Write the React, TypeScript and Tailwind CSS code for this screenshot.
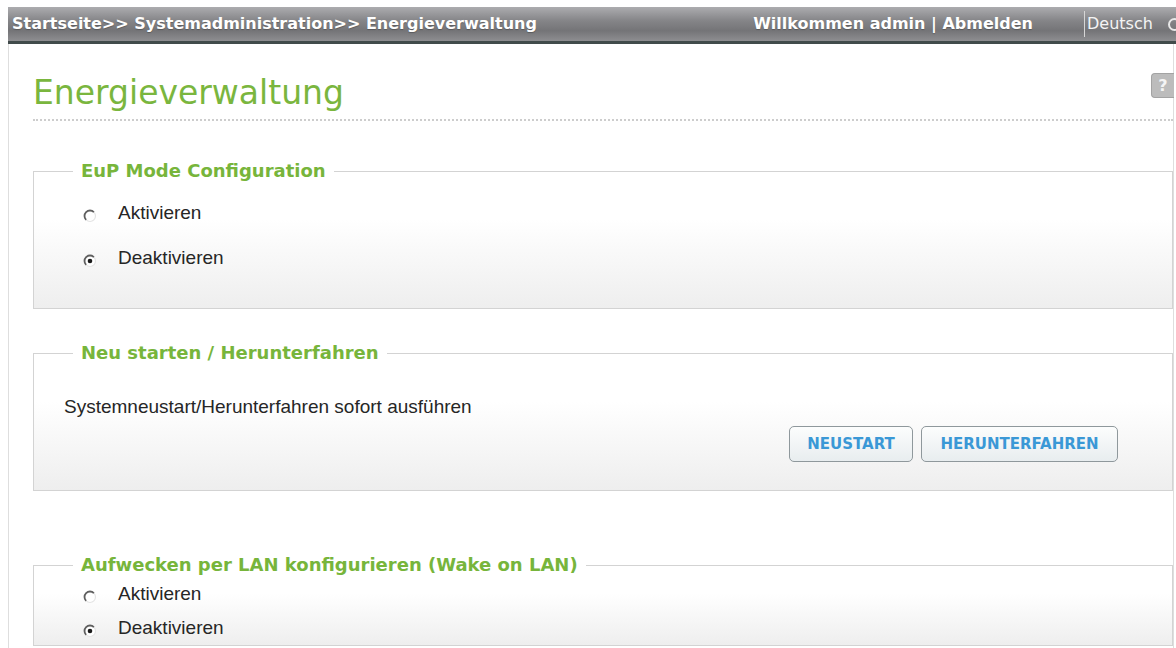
import React from "react";

const DEJAVU = "font-['DejaVu_Sans',Verdana,sans-serif]";

function Radio({ checked }: { checked?: boolean }) {
  return (
    <svg width="14" height="14" viewBox="0 0 14 14" className="mt-[6px] shrink-0">
      <circle cx="7" cy="7" r="5.5" fill="#fff" stroke="#e4e4e4" strokeWidth="1.2" />
      <path d="M3.11 10.89A5.5 5.5 0 0 1 10.89 3.11" fill="none" stroke="#5f5f5f" strokeWidth="1.8" />
      {checked && <circle cx="7" cy="7" r="2.3" fill="#1a1a1a" />}
    </svg>
  );
}

function RadioRow({ label, checked, height }: { label: string; checked?: boolean; height: string }) {
  return (
    <label className={`flex items-center gap-[21px] pl-[49px] ${height}`}>
      <Radio checked={checked} />
      <span className="text-[19px] leading-[24px] text-[#262626]">{label}</span>
    </label>
  );
}

function Legend({ children }: { children: React.ReactNode }) {
  return (
    <legend
      className={`ml-[39px] px-[8px] text-[18px] leading-[24px] font-bold text-[#77b53b] ${DEJAVU}`}
    >
      {children}
    </legend>
  );
}

const fieldsetCls =
  "border border-[#d3d3d3] bg-linear-to-b from-white from-35% to-[#eeeeee]";

export default function App() {
  return (
    <div className="w-[1176px] h-[648px] overflow-hidden bg-white pt-[7px] font-['Liberation_Sans',Arial,sans-serif]">
      {/* top bar */}
      <div className="ml-[8px] flex h-[37px] items-center border-b-[3px] border-[#414b4b] bg-[linear-gradient(to_bottom,#acacaf_0%,#858588_40%,#747477_70%,#8e8e91_100%)] pl-[4px] text-white">
        <span className={`text-[16px] font-bold leading-none ${DEJAVU} [text-shadow:0_1px_1px_rgba(0,0,0,0.25)]`}>
          Startseite&gt;&gt; Systemadministration&gt;&gt; Energieverwaltung
        </span>
        <span className={`ml-auto text-[16px] font-bold leading-none ${DEJAVU} [text-shadow:0_1px_1px_rgba(0,0,0,0.25)]`}>
          Willkommen admin | Abmelden
        </span>
        <span className={`ml-[51px] flex h-[26px] w-[84px] items-center border-l border-[#d6d6d6] pl-[2px] text-[16px] text-[#f4f4f4] ${DEJAVU}`}>
          Deutsch
        </span>
        <span className="w-[8px] overflow-hidden">
          <span className="block h-[13px] w-[13px] rounded-full border-2 border-[#e8e8e8]" />
        </span>
      </div>

      {/* content panel */}
      <div className="ml-[8px] mr-[2px] h-[604px] border-x border-[#dedede] pl-[24px]">
        <div className="flex items-start justify-between border-b-2 border-dotted border-[#cdcdcd] pt-[29px] pb-[6px]">
          <h1 className={`text-[33px] leading-[40px] text-[#7ab63e] ${DEJAVU}`}>Energieverwaltung</h1>
          <div className="mr-[-1px] flex h-[25px] w-[23px] items-center justify-center rounded-l-[4px] border border-r-0 border-[#a3a3a3] bg-[#bcbcbc]">
            <span className={`text-[16px] font-bold leading-none text-[#f4f4f4] ${DEJAVU}`}>?</span>
          </div>
        </div>

        <fieldset className={`mt-[38px] pb-[28px] ${fieldsetCls}`}>
          <Legend>EuP Mode Configuration</Legend>
          <div className="pt-[7px]">
            <RadioRow label="Aktivieren" height="h-[45px]" />
            <RadioRow label="Deaktivieren" checked height="h-[45px]" />
          </div>
        </fieldset>

        <fieldset className={`mt-[32px] pb-[28px] ${fieldsetCls}`}>
          <Legend>Neu starten / Herunterfahren</Legend>
          <p className="pt-[30px] pl-[30px] text-[19px] leading-[24px] text-[#262626]">
            Systemneustart/Herunterfahren sofort ausführen
          </p>
          <div className="mt-[7px] flex justify-end gap-[8px] pr-[54px]">
            <button className={`h-[36px] w-[124px] rounded-[5px] border-[1.5px] border-[#8f989c] bg-linear-to-b from-[#fcfdfd] to-[#e8edef] text-[15px] font-bold text-[#3a98d6] ${DEJAVU}`}>
              NEUSTART
            </button>
            <button className={`h-[36px] w-[197px] rounded-[5px] border-[1.5px] border-[#8f989c] bg-linear-to-b from-[#fcfdfd] to-[#e8edef] text-[15px] font-bold text-[#3a98d6] ${DEJAVU}`}>
              HERUNTERFAHREN
            </button>
          </div>
        </fieldset>

        <fieldset className={`mt-[62px] h-[93px] ${fieldsetCls}`}>
          <Legend>Aufwecken per LAN konfigurieren (Wake on LAN)</Legend>
          <RadioRow label="Aktivieren" height="h-[34px]" />
          <RadioRow label="Deaktivieren" checked height="h-[34px]" />
        </fieldset>
      </div>
    </div>
  );
}
